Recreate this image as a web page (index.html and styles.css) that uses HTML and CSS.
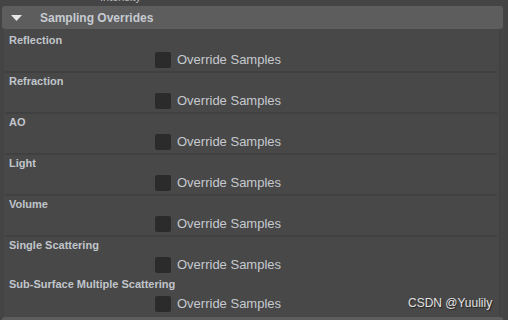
FILE: index.html
```html
<!DOCTYPE html>
<html lang="en">
<head>
  <meta charset="UTF-8" />
  <meta name="viewport" content="width=device-width, initial-scale=1.0" />
  <title>Sampling Overrides</title>
  <link rel="stylesheet" href="styles.css">
</head>
<body>
  <div class="top-cut"><span>Intensity</span></div>

  <div class="frame-header">
    <svg class="caret" width="11" height="6" viewBox="0 0 11 6"><polygon points="0,0 11,0 5.5,6" fill="#e6e6e6"/></svg>
    <span class="title">Sampling Overrides</span>
  </div>

  <div class="frame-body">
    <div class="row">
      <div class="label">Reflection</div>
      <label class="check"><span class="box"></span>Override Samples</label>
    </div>
    <div class="row">
      <div class="label">Refraction</div>
      <label class="check"><span class="box"></span>Override Samples</label>
    </div>
    <div class="row">
      <div class="label">AO</div>
      <label class="check"><span class="box"></span>Override Samples</label>
    </div>
    <div class="row">
      <div class="label">Light</div>
      <label class="check"><span class="box"></span>Override Samples</label>
    </div>
    <div class="row">
      <div class="label">Volume</div>
      <label class="check"><span class="box"></span>Override Samples</label>
    </div>
    <div class="row no-line">
      <div class="label">Single Scattering</div>
      <label class="check"><span class="box"></span>Override Samples</label>
    </div>
    <div class="row no-line">
      <div class="label">Sub-Surface Multiple Scattering</div>
      <label class="check"><span class="box"></span>Override Samples</label>
    </div>
  </div>

  <div class="frame-next"></div>

  <div class="watermark">CSDN @Yuulily</div>
</body>
</html>
```

FILE: styles.css
```css
* { box-sizing: border-box; }
body {
  margin: 0;
  width: 508px;
  height: 320px;
  overflow: hidden;
  position: relative;
  background: #444444;
  font-family: "Liberation Sans", Arial, sans-serif;
  color: #c4c8cc;
}
.top-cut {
  height: 6px;
  overflow: hidden;
  padding-left: 100px;
  font-size: 11px;
  color: #b8bcc0;
}
.top-cut span {
  display: block;
  line-height: 14px;
  margin-top: -10px;
}
.frame-header {
  display: flex;
  align-items: center;
  height: 23px;
  margin: 0 5px 0 2px;
  padding-left: 9px;
  background: #5d5d5d;
  border-radius: 3px;
}
.caret { display: block; }
.title {
  margin-left: 18px;
  font-size: 12px;
  font-weight: bold;
  color: #c6cbd1;
}
.frame-body {
  width: 496px;
  margin-left: 4px;
  padding: 3px 0 2px 1px;
  background: #484848;
  border-right: 1px solid #404040;
}
.row {
  padding: 1px 0 3px 0;
  margin-right: 2px;
  border-bottom: 2px solid #404040;
}
.row.no-line { border-bottom: none; }
.label {
  height: 14px;
  line-height: 14px;
  margin-bottom: 5px;
  padding-left: 4px;
  font-size: 11px;
  font-weight: bold;
  color: #c0c5cb;
}
.check {
  display: flex;
  align-items: center;
  height: 16px;
  padding-left: 150px;
  font-size: 13px;
  line-height: 16px;
  color: #c6cacf;
}
.box {
  width: 16px;
  height: 16px;
  margin-right: 6px;
  background: #2b2b2b;
  border-radius: 2px;
}
.frame-next {
  height: 6px;
  margin: 0 5px 0 2px;
  background: #5d5d5d;
  border-radius: 3px 3px 0 0;
}
.watermark {
  position: absolute;
  left: 408px;
  top: 296px;
  font-size: 12px;
  line-height: 14px;
  color: #e2e2e2;
  text-shadow: 1px 1px 1px #222;
}
```
